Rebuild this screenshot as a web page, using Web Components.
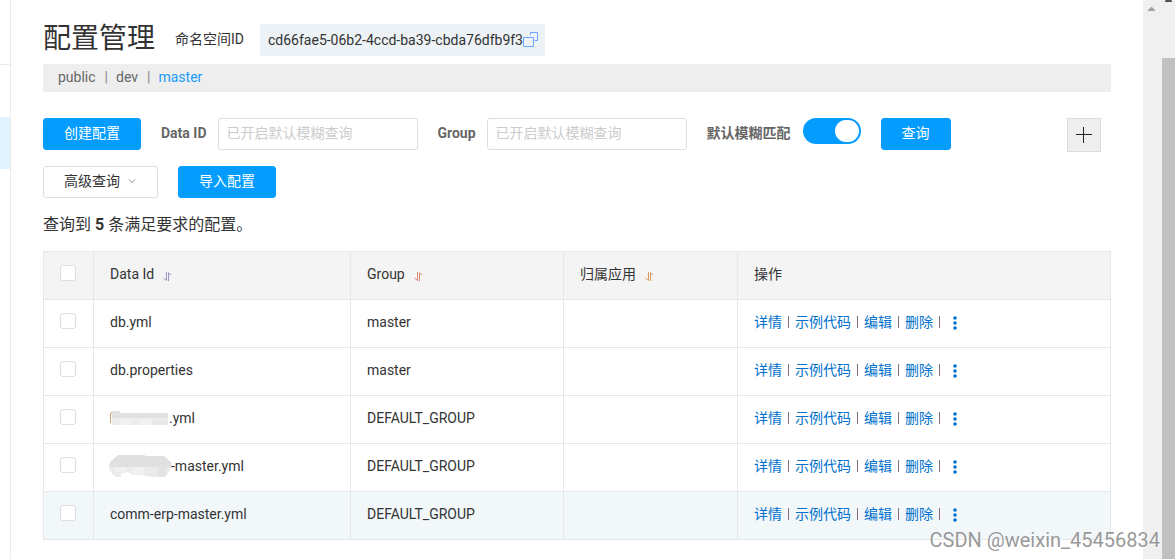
<!DOCTYPE html>
<html lang="zh-CN">
<head>
<meta charset="utf-8">
<title>配置管理</title>
<style>
html, body { margin: 0; }
body {
  background: #fff; color: #333;
  font: 14px/20px Roboto, "Noto Sans CJK SC", sans-serif;
}
</style>
</head>
<body>
<page-shell>
  <side-rail slot="side"></side-rail>
  <page-title namespace="cd66fae5-06b2-4ccd-ba39-cbda76dfb9f3">配置管理</page-title>
  <namespace-tabs></namespace-tabs>
  <query-toolbar></query-toolbar>
  <result-summary>查询到 <strong>5</strong> 条满足要求的配置。</result-summary>
  <config-table></config-table>
  <scroll-rails slot="rails"></scroll-rails>
  <water-mark slot="mark">CSDN @weixin_45456834</water-mark>
</page-shell>

<script>
function define(name, html, setup) {
  const template = document.createElement('template');
  template.innerHTML = html;
  customElements.define(name, class extends HTMLElement {
    constructor() {
      super();
      this.attachShadow({ mode: 'open' }).append(template.content.cloneNode(true));
    }
    connectedCallback() { if (setup) setup(this, this.shadowRoot); }
  });
}

define('page-shell', `
  <style>
    :host { display: flex; min-height: 100vh; position: relative; }
    main { flex: 1; min-width: 0; padding: 20px 32px 0; }
  </style>
  <slot name="side"></slot><main><slot></slot></main><slot name="rails"></slot><slot name="mark"></slot>`);

define('side-rail', `
  <style>
    :host { display: flex; flex-direction: column; width: 10px; border-right: 1px solid #ebebeb; }
    .head { height: 64px; border-bottom: 1px solid #ebebeb; }
    .active { height: 52px; margin-top: 52px; background: #e1f3fe; }
  </style>
  <div class="head"></div><div class="active"></div>`);

define('page-title', `
  <style>
    :host { display: flex; align-items: center; height: 40px; }
    h1 { margin: 0; padding-bottom: 2px; font-size: 28px; line-height: 36px; font-weight: 400; }
    .label { margin-left: 20px; padding-bottom: 2px; }
    .id { display: flex; align-items: center; height: 32px; margin-left: 16px; padding: 0 6px 0 8px; background: #edf2f6; }
    button { display: flex; padding: 0; border: 0; background: none; cursor: pointer; }
  </style>
  <h1><slot></slot></h1><span class="label">命名空间ID</span>
  <span class="id"><span id="ns"></span>
    <button type="button" aria-label="复制"><svg width="16" height="16" fill="none" stroke="#6da5ff"><path d="M.5 5.500h10v9H.5zM7.500 3V.5h7v8h-3"/></svg></button>
  </span>`, (host, root) => {
  root.getElementById('ns').textContent = host.getAttribute('namespace');
});

define('namespace-tabs', `
  <style>
    :host { display: block; margin-top: 4px; background: #eee; }
    nav { display: flex; align-items: center; box-sizing: border-box; height: 28px; padding: 0 15px 2px; color: #666; }
    a { color: #666; text-decoration: none; }
    a[aria-current] { color: #209bfa; }
    .bar { padding: 0 8px 0 9px; color: #888; }
  </style>
  <nav><a href="#public">public</a><span class="bar">|</span><a href="#dev">dev</a><span class="bar">|</span><a href="#master" aria-current="page">master</a></nav>`);

define('action-button', `
  <style>
    :host { display: block; }
    button {
      display: flex; align-items: center; justify-content: center; gap: 8px; box-sizing: border-box; height: 32px; padding: 0 20px 2px;
      border: 1px solid #049dff; border-radius: 3px; background: #049dff; color: #fff;
      font: inherit; white-space: nowrap; cursor: pointer;
    }
    :host([plain]) button { background: #fff; border-color: #dcdee3; color: #333; }
  </style>
  <button type="button"><slot></slot></button>`);

define('search-field', `
  <style>
    :host { display: flex; align-items: center; gap: 11px; }
    label { padding-bottom: 2px; color: #666; font-weight: bold; }
    input {
      box-sizing: border-box; width: 200px; height: 32px; padding: 0 8px 2px;
      border: 1px solid #dcdee3; border-radius: 3px; background: #fff; color: #333; font: inherit; outline: 0;
    }
    input::placeholder { color: #ccc; opacity: 1; }
  </style>
  <label for="field"><slot></slot></label><input id="field" type="text" placeholder="已开启默认模糊查询">`);

define('toggle-switch', `
  <style>
    :host { display: flex; gap: 12px; height: 32px; }
    label { color: #666; font-weight: bold; line-height: 30px; }
    input {
      appearance: none; box-sizing: border-box; display: flex; justify-content: flex-end;
      width: 58px; height: 26px; margin: 0; padding: 2px; border-radius: 13px; background: #ccc; cursor: pointer;
    }
    input::before { content: ""; width: 24px; height: 22px; border-radius: 12px; background: #fff; }
    input:checked { background: #049dff; }
  </style>
  <label for="toggle"><slot></slot></label><input id="toggle" type="checkbox" role="switch" checked>`);

define('query-toolbar', `
  <style>
    :host { display: flex; justify-content: space-between; margin-top: 26px; }
    form { display: grid; gap: 16px; }
    .row { display: flex; flex-wrap: wrap; gap: 16px 20px; }
    .add { box-sizing: border-box; flex: none; width: 34px; height: 34px; margin-right: 10px; padding: 0; border: 1px solid #ddd; background: #eee; display: grid; place-items: center; cursor: pointer; }
  </style>
  <form>
    <div class="row">
      <action-button>创建配置</action-button>
      <search-field>Data ID</search-field>
      <search-field>Group</search-field>
      <toggle-switch>默认模糊匹配</toggle-switch>
      <action-button>查询</action-button>
    </div>
    <div class="row">
      <action-button plain>高级查询<svg width="9" height="6" fill="none" stroke="#888"><path d="M1 1.500l3 3 3-3"/></svg></action-button>
      <action-button>导入配置</action-button>
    </div>
  </form>
  <button class="add" type="button" aria-label="添加"><svg width="16" height="16" stroke="#222"><path d="M0 7.500h16M7.500 0v16"/></svg></button>`);

define('result-summary', `
  <style>:host { display: block; margin: 15px 0 14px; font-size: 16px; line-height: 24px; }</style>
  <slot></slot>`);

define('sort-icon', `
  <style>:host { display: inline-block; width: 9px; height: 9px; margin-left: 9px; vertical-align: -2px; } svg { display: block; }</style>
  <svg width="9" height="9" fill="none" stroke="currentColor"><path d="M.5 6l3 2.500V0M5.500 9V.8L8 3"/></svg>`);

define('redacted-text', `
  <style>
    :host { display: inline-flex; align-items: center; height: 20px; vertical-align: top; }
    svg { display: block; flex: none; overflow: visible; }
    .long { display: none; }
    :host([shape="cloud"]) .long { display: block; }
    :host([shape="cloud"]) .short { display: none; }
  </style>
  <svg class="short" width="59" height="16">
    <path d="M.5 13V5q0-3 2.500-3" stroke="#c9a06c" fill="none"/><path d="M2 1h7l2 2h47v6H2z" fill="#e1e1e1"/><path d="M2 8h56v7H2z" fill="#ececec"/>
    <path d="M10 9h11v6H10zM29 9h13v6H29z" fill="#f1f1f1"/><path d="M42 10h16v5H42z" fill="#e8e8e8"/>
  </svg>
  <svg class="long" width="61" height="22">
    <path d="M-1 12l1-5 8-7h26l2 1h18l7 6 1 6z" fill="#e0e0e0"/><path d="M-1 12h62l-1 4-5 6H42l-12-2-8-1-4-2-7 1v4H6l-6-6z" fill="#eaeaea"/>
    <path d="M5 12h12v5H5zM22 12h12v8H22z" fill="#f0f0f0"/><path d="M48 12h8v9h-8z" fill="#e3e3e3"/>
  </svg><slot></slot>`);

define('row-actions', `
  <style>
    :host { display: flex; align-items: center; gap: 6px; }
    a { color: #0070cc; text-decoration: none; }
    i { width: 1px; height: 12px; background: #8a6d75; }
    button { display: flex; margin: 2px 0 0 7px; padding: 0; border: 0; background: none; color: #0070cc; cursor: pointer; }
  </style>
  <a href="#detail">详情</a><i></i><a href="#sample">示例代码</a><i></i><a href="#edit">编辑</a><i></i><a href="#delete">删除</a><i></i>
  <button type="button" aria-label="更多"><svg width="4" height="14" fill="currentColor"><circle cx="2" cy="2" r="1.800"/><circle cx="2" cy="7" r="1.800"/><circle cx="2" cy="12" r="1.800"/></svg></button>`);

define('config-table', `
  <style>
    :host { display: block; }
    table { width: 100%; table-layout: fixed; border-collapse: collapse; }
    .check { width: 50px; } .data { width: 257px; } .group { width: 213px; } .app { width: 174px; }
    th, td { box-sizing: border-box; height: 48px; padding: 0 16px 3px; border: 1px solid #e6e7eb; text-align: left; font-weight: normal; white-space: nowrap; }
    th { background: #f4f4f4; }
    tr.hover td { background: #f2f7fa; }
    input { appearance: none; box-sizing: border-box; display: block; width: 16px; height: 16px; margin: 0 0 3px; border: 1px solid #dcdee3; border-radius: 3px; background: #fff; }
    input:checked { background: #049dff; }
    .violet { color: #9a96c4; } .red { color: #d78972; } .orange { color: #d99a62; }
  </style>
  <table>
    <colgroup><col class="check"><col class="data"><col class="group"><col class="app"><col></colgroup>
    <thead><tr>
      <th><input type="checkbox" aria-label="全选"></th>
      <th>Data Id<sort-icon class="violet"></sort-icon></th>
      <th>Group<sort-icon class="red"></sort-icon></th>
      <th>归属应用<sort-icon class="orange"></sort-icon></th>
      <th>操作</th>
    </tr></thead>
    <tbody></tbody>
  </table>`, (host, root) => {
  const rows = [
    ['db.yml', 'master'],
    ['db.properties', 'master'],
    ['<redacted-text>.yml</redacted-text>', 'DEFAULT_GROUP'],
    ['<redacted-text shape="cloud">-master.yml</redacted-text>', 'DEFAULT_GROUP'],
    ['comm-erp-master.yml', 'DEFAULT_GROUP', 'hover'],
  ];
  root.querySelector('tbody').innerHTML = rows.map(([id, group, state = '']) => `
    <tr class="${state}"><td><input type="checkbox" aria-label="选择"></td><td>${id}</td><td>${group}</td><td></td><td><row-actions></row-actions></td></tr>`).join('');
});

define('scroll-rails', `
  <style>
    :host { display: flex; flex: none; width: 32px; background: #f0f0f0; }
    .inner { width: 19px; padding: 7px 0 0 5px; box-sizing: border-box; }
    .outer { width: 13px; display: flex; flex-direction: column; }
    .top { height: 58px; padding-left: 3px; }
    .thumb { flex: 1; background: #c1c1c1; }
    svg { display: block; }
  </style>
  <div class="inner"><svg width="7" height="4" fill="#a3a3a3"><path d="M0 4V3l3-3h1l3 3v1z"/></svg></div>
  <div class="outer"><div class="top"><svg width="7" height="2" fill="#505050"><path d="M0 2V1l1-1h5l1 1v1z"/></svg></div><div class="thumb"></div></div>`);

define('water-mark', `
  <style>
    :host { position: absolute; right: 15px; bottom: 7px; font-size: 20px; line-height: 24px; color: #999; text-shadow: 1px 1px 1px #fff; white-space: nowrap; pointer-events: none; }
  </style>
  <slot></slot>`);
</script>
</body>
</html>
